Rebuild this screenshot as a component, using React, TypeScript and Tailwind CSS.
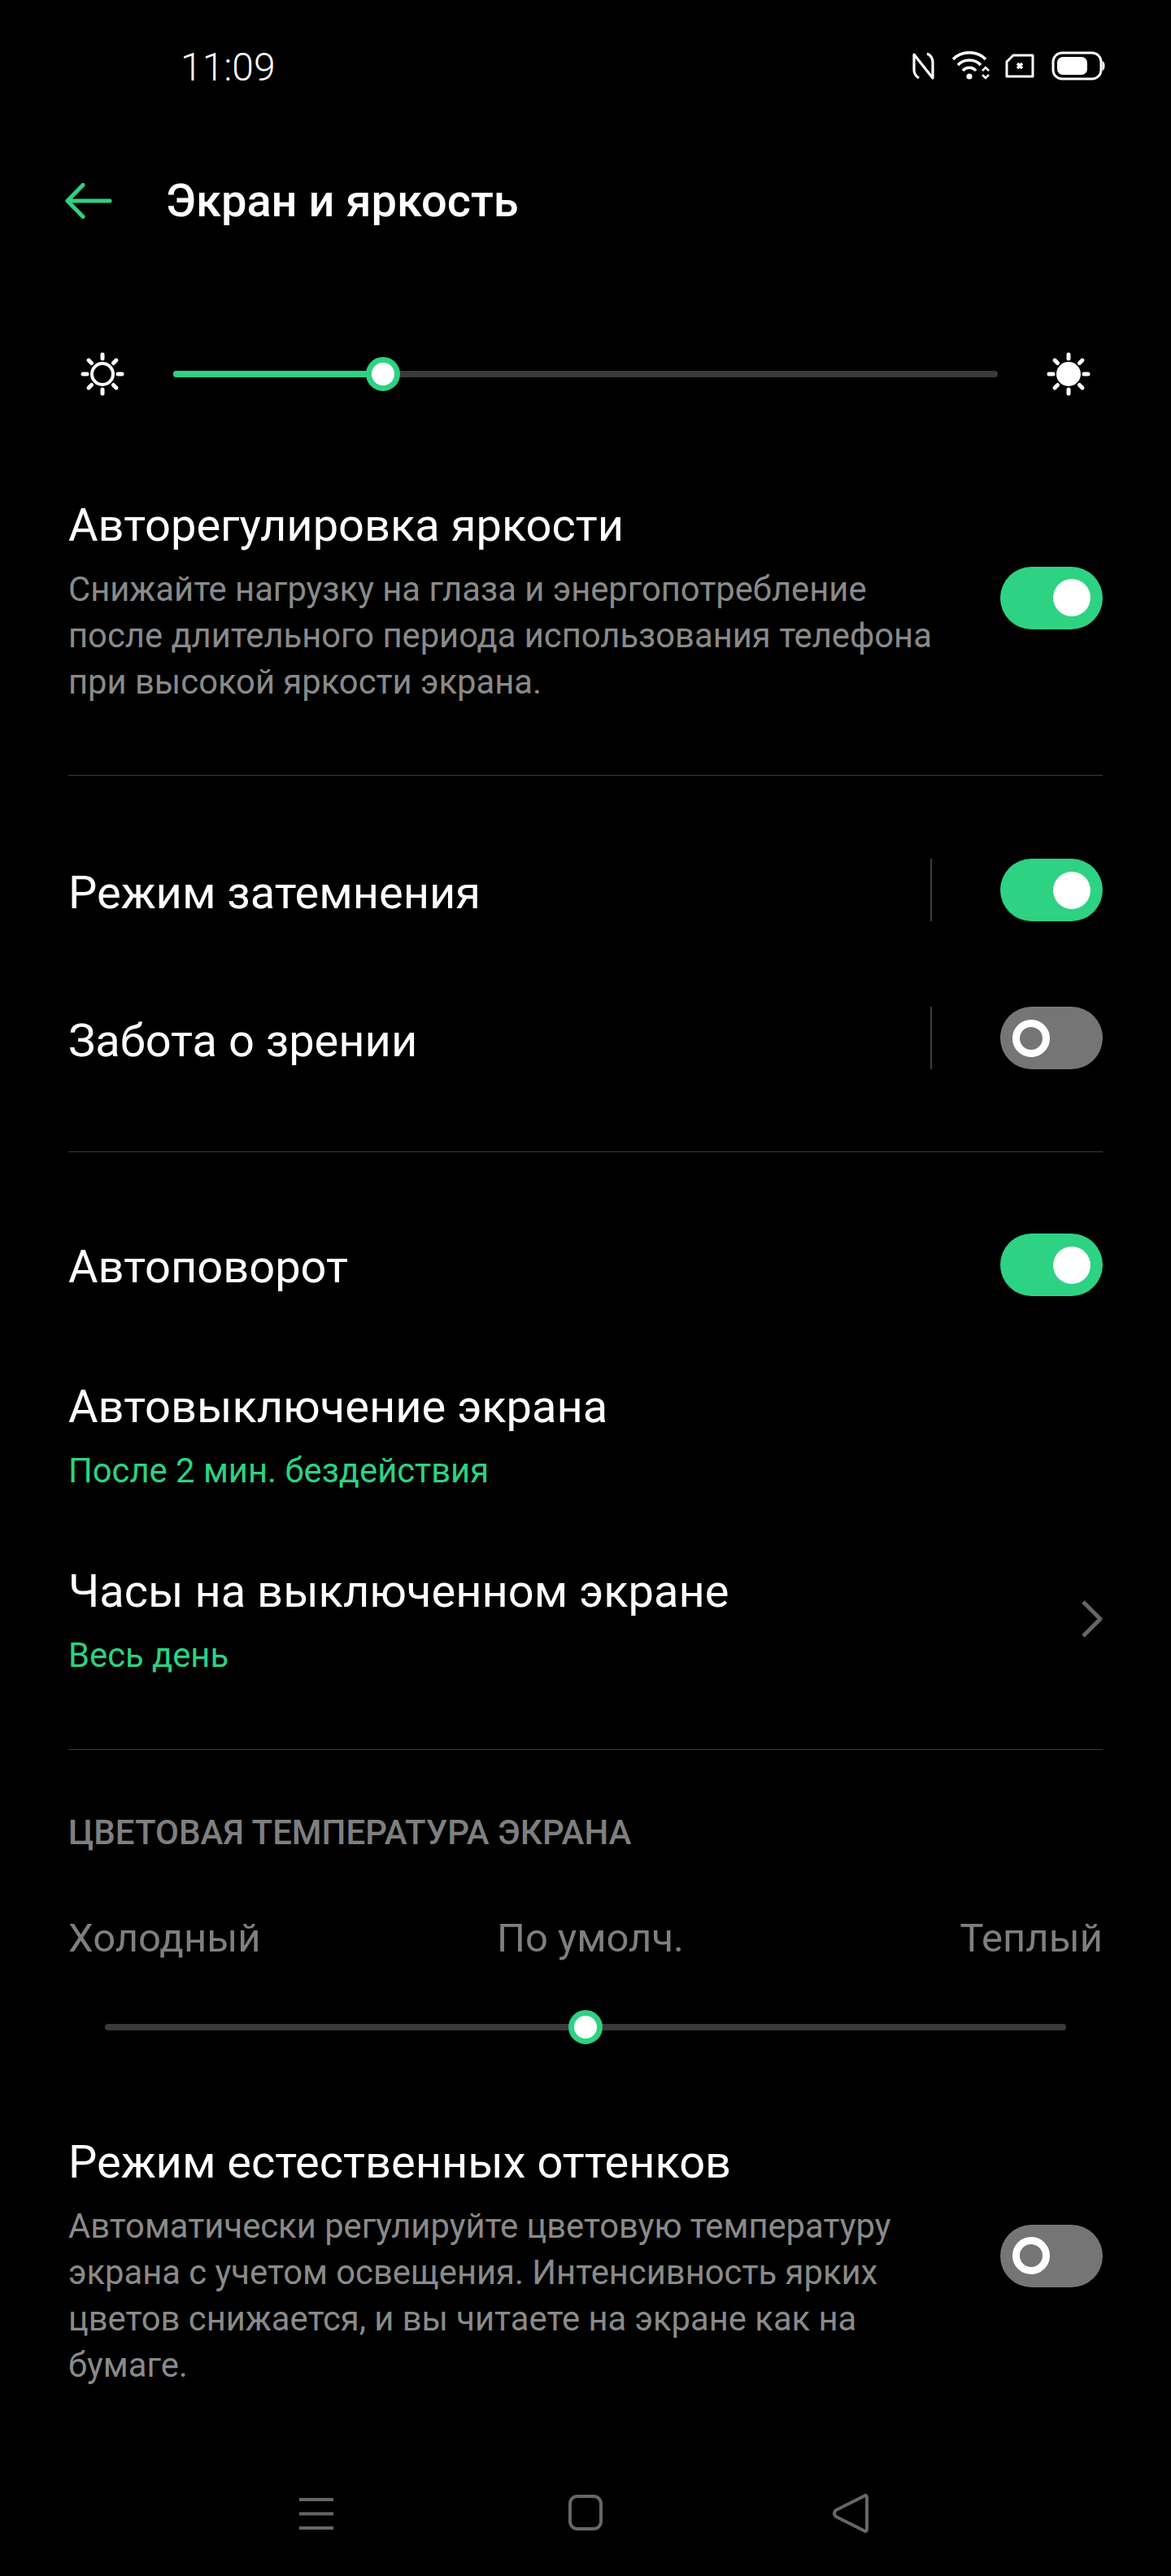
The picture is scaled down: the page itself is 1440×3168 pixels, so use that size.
const GREEN = "#2dd282";

function Toggle({ on, className = "" }: { on: boolean; className?: string }) {
  if (on) {
    return (
      <div className={"w-[126px] h-[77px] rounded-full bg-[#2dd282] flex items-center justify-end pr-[15px] shrink-0 " + className}>
        <div className="w-[46px] h-[46px] rounded-full bg-white"></div>
      </div>
    );
  }
  return (
    <div className={"w-[126px] h-[77px] rounded-full bg-[#757575] flex items-center pl-[15px] shrink-0 " + className}>
      <div className="w-[46px] h-[46px] rounded-full border-[9px] border-white"></div>
    </div>
  );
}

function Sun({ filled }: { filled?: boolean }) {
  const rays = [0, 45, 90, 135, 180, 225, 270, 315];
  return (
    <svg width="56" height="56" viewBox="0 0 56 56" className="shrink-0">
      {filled ? (
        <circle cx="28" cy="28" r="15" fill="#fff" />
      ) : (
        <circle cx="28" cy="28" r="13" fill="none" stroke="#fff" strokeWidth="4" />
      )}
      {rays.map((r) => (
        <line
          key={r}
          x1="28"
          y1="4"
          x2="28"
          y2="9"
          stroke="#fff"
          strokeWidth="5"
          strokeLinecap="round"
          transform={`rotate(${r} 28 28)`}
        />
      ))}
    </svg>
  );
}

function StatusIcons() {
  return (
    <div className="flex items-center">
      <svg width="27" height="34" viewBox="0 0 27 34" fill="none" stroke="#fff" strokeWidth="3.2">
        <path d="M8 32 C3 29 2 26 2 22 V3 L25 32 V13 C25 8 23 4 18 2" strokeLinejoin="round" />
      </svg>
      <svg width="48" height="36" viewBox="0 0 48 36" fill="none" stroke="#fff" strokeWidth="3.6" className="ml-[22px]">
        <path d="M1 10 C11 -1 31 -1 41 10" />
        <path d="M7 17 C14 9 28 9 35 17" />
        <path d="M13 24 C17 19 25 19 29 24" />
        <circle cx="21" cy="31" r="3.6" fill="#fff" stroke="none" />
        <path d="M37 24 L41 20 L45 24 M37 29 L41 33 L45 29" strokeWidth="2.6" />
      </svg>
      <svg width="36" height="30" viewBox="0 0 36 30" fill="none" stroke="#fff" className="ml-[17px]">
        <path d="M2 10 L10 2 H34 V28 H2 Z" strokeWidth="3" strokeLinejoin="round" />
        <path d="M15 12 L21 18 M21 12 L15 18" strokeWidth="3.4" />
      </svg>
      <svg width="66" height="36" viewBox="0 0 66 36" fill="none" className="ml-[21px]">
        <rect x="2" y="2" width="59" height="32" rx="11" stroke="#fff" strokeWidth="3" />
        <rect x="7" y="7" width="37" height="22" rx="7" fill="#fff" />
        <path d="M62.5 12 C65 13 65.5 15 65.5 18 C65.5 21 65 23 62.5 24 Z" fill="#fff" />
      </svg>
    </div>
  );
}

function Divider() {
  return <div className="h-[1px] bg-[#3a3a3a]"></div>;
}

function ToggleDesc({ title, desc, on, toggleClass }: { title: string; desc: string[]; on: boolean; toggleClass: string }) {
  return (
    <div className="flex items-center justify-between">
      <div>
        <div className="text-[56px] leading-[68px] text-white">{title}</div>
        <div className="text-[41.75px] leading-[57px] text-[#8a8a8a] mt-[16px]">
          {desc.map((l) => (
            <div key={l}>{l}</div>
          ))}
        </div>
      </div>
      <Toggle on={on} className={toggleClass} />
    </div>
  );
}

function SplitRow({ title, on }: { title: string; on: boolean }) {
  return (
    <div className="h-[77px] flex items-center justify-between">
      <div className="text-[56px] text-white pt-[6px]">{title}</div>
      <div className="flex items-center">
        <div className="w-[2px] h-[77px] bg-[#3c3c3c] mr-[84px]"></div>
        <Toggle on={on} />
      </div>
    </div>
  );
}

export default function App() {
  return (
    <div className="w-[1440px] h-[3168px] bg-black overflow-hidden flex flex-col font-['Roboto',sans-serif]">
      {/* status bar */}
      <div className="h-[162px] shrink-0 flex items-center justify-between pl-[222px] pr-[81px]">
        <span className="text-[48px] font-light text-white pt-[3px]">11:09</span>
        <StatusIcons />
      </div>

      {/* header */}
      <div className="h-[170px] shrink-0 flex items-center pl-[80px]">
        <svg width="58" height="44" viewBox="0 0 58 44" fill="none" stroke={GREEN} strokeWidth="5" strokeLinecap="round" strokeLinejoin="round">
          <path d="M55 22 H3 M22 2.5 L3 22 L22 41.5" />
        </svg>
        <h1 className="ml-[66px] text-[56px] font-medium text-white">Экран и яркость</h1>
      </div>

      {/* brightness */}
      <div className="h-[96px] mt-[80px] shrink-0 flex items-center justify-between px-[98px]">
        <Sun />
        <div className="flex-1 mx-[59px] relative h-[8px] rounded-full bg-[#3a3a3a]">
          <div className="h-[8px] w-[258px] rounded-full bg-[#2dd282]"></div>
          <div className="absolute left-[237px] top-[-17px] w-[42px] h-[42px] rounded-full bg-white border-[7px] border-[#2dd282]"></div>
        </div>
        <Sun filled />
      </div>

      <div className="px-[84px] flex flex-col">
        <div className="mt-[104px]">
          <ToggleDesc
            on
            toggleClass="mb-[9px]"
            title="Авторегулировка яркости"
            desc={[
              "Снижайте нагрузку на глаза и энергопотребление",
              "после длительного периода использования телефона",
              "при высокой яркости экрана.",
            ]}
          />
        </div>
        <div className="mt-[86px]">
          <Divider />
        </div>

        <div className="mt-[102px]">
          <SplitRow title="Режим затемнения" on />
        </div>
        <div className="mt-[105px]">
          <SplitRow title="Забота о зрении" on={false} />
        </div>
        <div className="mt-[101px]">
          <Divider />
        </div>

        <div className="mt-[100px] h-[77px] flex items-center justify-between">
          <div className="text-[56px] text-white pt-[4px]">Автоповорот</div>
          <Toggle on />
        </div>

        <div className="mt-[102px]">
          <div className="text-[56px] leading-[68px] text-white">Автовыключение экрана</div>
          <div className="text-[41.75px] leading-[57px] text-[#2dd282] mt-[16px]">После 2 мин. бездействия</div>
        </div>

        <div className="mt-[86px] flex items-center justify-between">
          <div>
            <div className="text-[56px] leading-[68px] text-white">Часы на выключенном экране</div>
            <div className="text-[41.75px] leading-[57px] text-[#2dd282] mt-[16px]">Весь день</div>
          </div>
          <svg width="26" height="46" viewBox="0 0 26 46" fill="none" stroke="#666666" strokeWidth="5" strokeLinejoin="round" className="mb-[6px]">
            <path d="M2 2 L23 23 L2 44" />
          </svg>
        </div>

        <div className="mt-[87px]">
          <Divider />
        </div>

        <div className="mt-[74px] text-[42px] leading-[56px] font-medium text-[#7f7f7f]">ЦВЕТОВАЯ ТЕМПЕРАТУРА ЭКРАНА</div>

        <div className="mt-[70px] grid grid-cols-3 items-center text-[49px] leading-[64px] text-[#7f7f7f]">
          <span>Холодный</span>
          <span className="text-center pl-[12px]">По умолч.</span>
          <span className="text-right">Теплый</span>
        </div>

        <div className="mt-[73px] mx-[45px] relative h-[8px] rounded-full bg-[#3a3a3a]">
          <div className="absolute left-[570px] top-[-17px] w-[42px] h-[42px] rounded-full bg-white border-[7px] border-[#2dd282]"></div>
        </div>

        <div className="mt-[128px]">
          <ToggleDesc
            on={false}
            toggleClass="mb-[14px]"
            title="Режим естественных оттенков"
            desc={[
              "Автоматически регулируйте цветовую температуру",
              "экрана с учетом освещения. Интенсивность ярких",
              "цветов снижается, и вы читаете на экране как на",
              "бумаге.",
            ]}
          />
        </div>
      </div>

      {/* nav bar */}
      <div className="mt-auto h-[116px] shrink-0 relative">
        <svg width="1440" height="116" viewBox="0 0 1440 116" fill="none" stroke="#666666" strokeWidth="4" className="absolute left-0 top-0">
          <path d="M368 22 H410 M368 39.5 H410 M368 57 H410" />
          <rect x="701" y="18" width="38" height="40" rx="9" />
          <path d="M1066 20 Q1066 15 1062 18 L1028 35 Q1024 39 1028 43 L1062 60 Q1066 63 1066 58 Z" strokeLinejoin="round" />
        </svg>
      </div>
    </div>
  );
}
